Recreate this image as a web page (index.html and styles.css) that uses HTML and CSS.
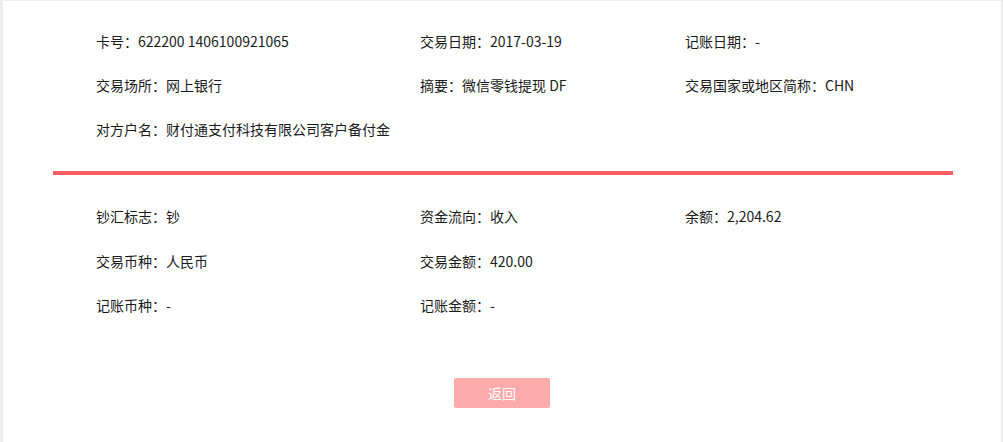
FILE: index.html
```html
<!DOCTYPE html>
<html>
	<head>
		<meta charset="UTF-8">
		<title>交易明细</title>
		<link rel="stylesheet" href="styles.css">
	</head>
	<body>
		<div class="wrap">
			<ul class="info">
				<li>卡号：622200 1406100921065</li>
				<li>交易日期：2017-03-19</li>
				<li>记账日期：-</li>
				<li>交易场所：网上银行</li>
				<li>摘要：微信零钱提现 DF</li>
				<li>交易国家或地区简称：CHN</li>
				<li>对方户名：财付通支付科技有限公司客户备付金</li>
			</ul>
			<div class="line"></div>
			<ul class="info info2">
				<li>钞汇标志：钞</li>
				<li>资金流向：收入</li>
				<li>余额：2,204.62</li>
				<li>交易币种：人民币</li>
				<li>交易金额：420.00</li>
				<li></li>
				<li>记账币种：-</li>
				<li>记账金额：-</li>
			</ul>
			<div class="btn-box">
				<a class="btn" href="javascript:;">返回</a>
			</div>
		</div>
	</body>
</html>
```

FILE: styles.css
```css
*{
	margin: 0;
	padding: 0;
	list-style: none;
}
html,body{
	height: 100%;
}
body{
	background-color: #eee;
	padding: 1px 2px 0 3px;
	box-sizing: border-box;
	font-family: "Microsoft YaHei", "Noto Sans CJK SC", sans-serif;
	font-size: 14px;
	color: #1a1a1a;
}
.wrap{
	background-color: #fff;
	min-height: 100%;
	padding: 18px 48px 0 50px;
	box-sizing: border-box;
}
.info{
	display: grid;
	grid-template-columns: 324px 265px 1fr;
	padding-left: 43px;
}
.info li{
	height: 44px;
	line-height: 44px;
	white-space: nowrap;
}
.info2 li{
	height: 44.5px;
}
.line{
	height: 4px;
	background-color: #ff5e5e;
	margin: 20px 0 19px;
}
.btn-box{
	display: flex;
	justify-content: center;
	padding-top: 50px;
}
.btn{
	display: block;
	width: 96px;
	height: 30px;
	line-height: 30px;
	text-align: center;
	color: #fff;
	background-color: #fcaaaa;
	border-radius: 2px;
	text-decoration: none;
	margin-right: 2px;
}
```
